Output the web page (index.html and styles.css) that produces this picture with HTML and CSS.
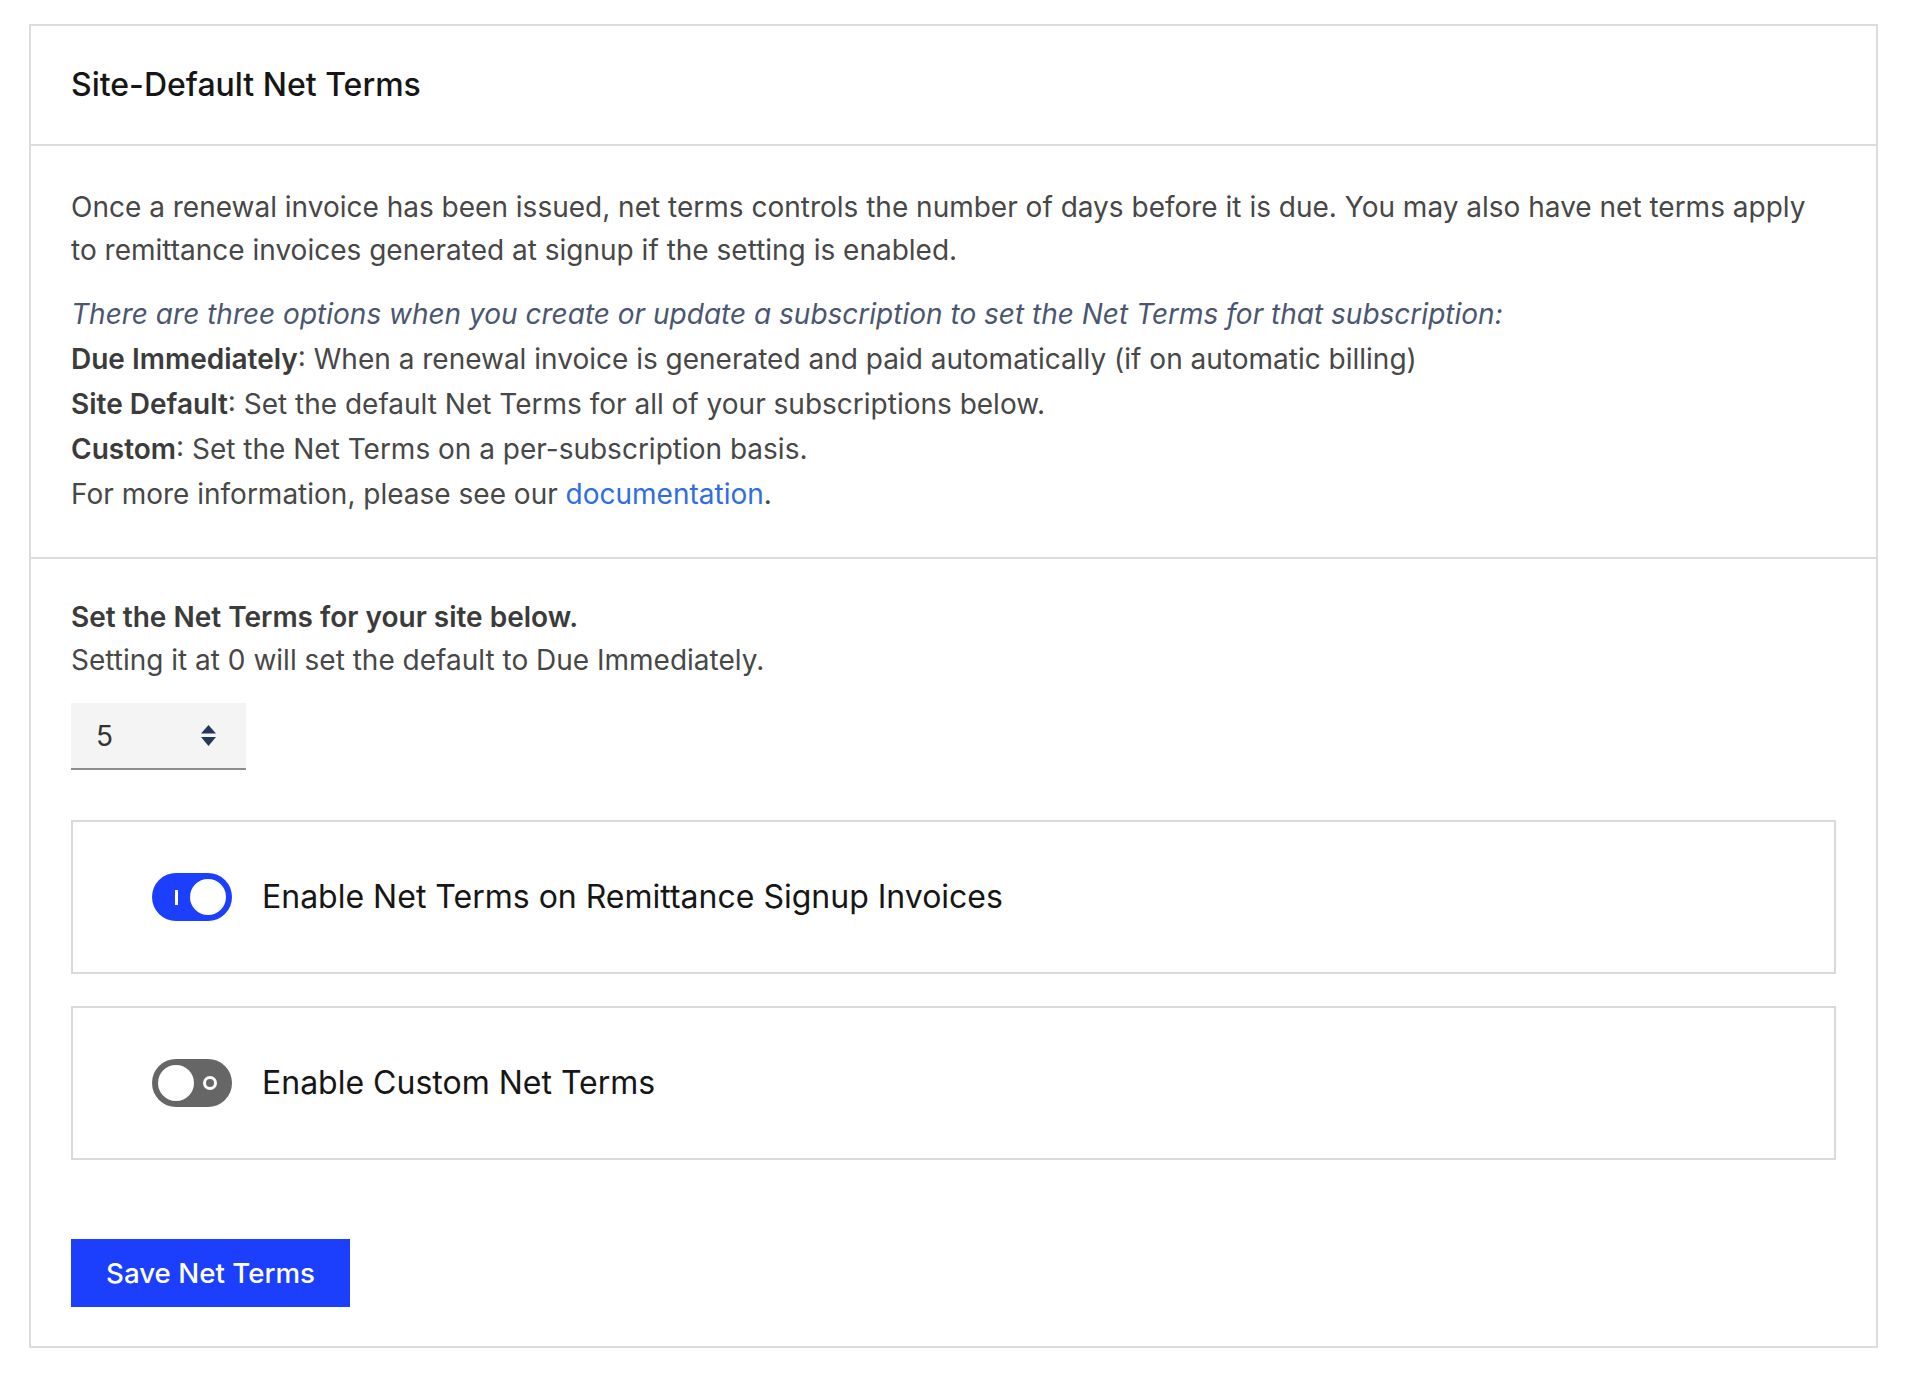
FILE: index.html
```html
<!DOCTYPE html>
<html lang="en">
<head>
<meta charset="utf-8">
<title>Site-Default Net Terms</title>
<link rel="stylesheet" href="styles.css">
</head>
<body>
<div class="page">
  <div class="card">
    <div class="card-header">
      <h2 class="card-title">Site-Default Net Terms</h2>
    </div>
    <div class="section section-desc">
      <p class="intro">Once a renewal invoice has been issued, net terms controls the number of days before it is due. You may also have net terms apply to remittance invoices generated at signup if the setting is enabled.</p>
      <div class="options">
        <div class="opt-intro">There are three options when you create or update a subscription to set the Net Terms for that subscription:</div>
        <div><strong>Due Immediately</strong>: When a renewal invoice is generated and paid automatically (if on automatic billing)</div>
        <div><strong>Site Default</strong>: Set the default Net Terms for all of your subscriptions below.</div>
        <div><strong>Custom</strong>: Set the Net Terms on a per-subscription basis.</div>
        <div>For more information, please see our <a class="link" href="#">documentation</a>.</div>
      </div>
    </div>
    <div class="section section-form">
      <div class="form-lead"><strong>Set the Net Terms for your site below.</strong></div>
      <div class="form-lead">Setting it at 0 will set the default to Due Immediately.</div>
      <div class="num-input">
        <span class="num-value">5</span>
        <svg class="num-spin" width="15" height="21" viewBox="0 0 15 21" aria-hidden="true">
          <path d="M0 8.5 L7.5 0 L15 8.5 Z" fill="#253858"/>
          <path d="M0 12 L15 12 L7.5 21 Z" fill="#253858"/>
        </svg>
      </div>
      <div class="toggle-box">
        <span class="toggle on"><span class="mark-i"></span><span class="knob"></span></span>
        <span class="toggle-label">Enable Net Terms on Remittance Signup Invoices</span>
      </div>
      <div class="toggle-box toggle-box-2">
        <span class="toggle off"><span class="knob"></span><span class="mark-o"></span></span>
        <span class="toggle-label">Enable Custom Net Terms</span>
      </div>
      <button class="btn-primary" type="button">Save Net Terms</button>
    </div>
  </div>
</div>
</body>
</html>
```

FILE: styles.css
```css
* { box-sizing: border-box; }

body {
  margin: 0;
  background: #ffffff;
  font-family: Inter, "Noto Sans", "Liberation Sans", sans-serif;
  color: #474747;
}

.page {
  padding: 24px 36px 30px 29px;
}

.card {
  border: 2px solid #dcdcdc;
  background: #ffffff;
}

.card-header {
  padding: 40px;
  border-bottom: 2px solid #dcdcdc;
}

.card-title {
  margin: 0;
  font-size: 32px;
  line-height: 38px;
  font-weight: 500;
  color: #161616;
}

.section {
  padding: 40px;
}

.section-desc {
  border-bottom: 2px solid #dcdcdc;
}

.intro {
  margin: 0 0 21px;
  font-size: 28px;
  line-height: 42.67px;
}

.options {
  font-size: 28px;
  line-height: 45px;
}

.options strong,
.form-lead strong {
  font-weight: 600;
  color: #3b3b3b;
}

.opt-intro {
  font-style: italic;
  color: #4a5670;
}

.link {
  color: #2f6de1;
  text-decoration: none;
}

.section-form {
  padding-top: 37px;
  padding-bottom: 39px;
}

.form-lead {
  font-size: 28px;
  line-height: 42.5px;
}

.num-input {
  margin-top: 22px;
  width: 175px;
  height: 67px;
  background: #f4f4f4;
  border-bottom: 2px solid #8d8d8d;
  display: flex;
  align-items: center;
  justify-content: space-between;
  padding: 0 30px 0 25px;
  font-size: 28px;
  color: #333333;
}

.num-spin { display: block; }

.toggle-box {
  margin-top: 50px;
  height: 154px;
  border: 2px solid #d9d9d9;
  display: flex;
  align-items: center;
  gap: 30px;
  padding-left: 79px;
}

.toggle-box-2 {
  margin-top: 32px;
}

.toggle {
  flex: none;
  width: 80px;
  height: 48px;
  border-radius: 24px;
  display: flex;
  align-items: center;
  padding: 0 6px;
}

.toggle.on { background: #1c3ffd; }
.toggle.off { background: #666666; }

.knob {
  width: 36px;
  height: 36px;
  border-radius: 50%;
  background: #ffffff;
}

.toggle.on .knob { margin-left: auto; }

.mark-i {
  width: 3px;
  height: 15px;
  background: #ffffff;
  margin-left: 17px;
}

.mark-o {
  width: 14px;
  height: 14px;
  border-radius: 50%;
  border: 3px solid #ffffff;
  margin-left: auto;
  margin-right: 9px;
}

.toggle-label {
  font-size: 32px;
  line-height: 40px;
  color: #161616;
}

.btn-primary {
  margin-top: 79px;
  height: 68px;
  padding: 0 35px;
  border: none;
  border-radius: 0;
  background: #1c3ffd;
  color: #ffffff;
  font-family: Inter, "Noto Sans", "Liberation Sans", sans-serif;
  font-size: 27.7px;
  font-weight: 500;
  display: block;
}
```
